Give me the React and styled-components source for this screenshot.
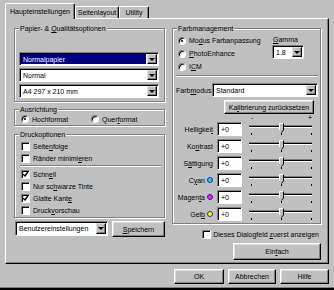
import React from "react"
import styled, { createGlobalStyle } from "styled-components"

const GlobalStyle = createGlobalStyle`
  html, body {
    margin: 0;
    padding: 0;
    background: #c0c0c0;
  }
  body {
    font-family: "Liberation Sans", Arial, sans-serif;
    font-size: 7px;
    color: #000;
  }
  * {
    box-sizing: border-box;
  }
  u {
    text-underline-offset: 1px;
  }
`

// window + tabs
const Window = styled.div`
  width: 334px;
  height: 290px;
  padding: 3px 0 0 5px;
  background: #c0c0c0;
  border-bottom: 2px solid #000;
  box-shadow: inset 0 -1px #808080;
  display: flex;
  flex-direction: column;
`
const TabStrip = styled.div`
  display: flex;
  align-items: flex-end;
  height: 15px;
  position: relative;
  z-index: 1;
`
const Tab = styled.div`
  width: ${p => p.$w}px;
  height: ${p => (p.$active ? 16 : 12)}px;
  margin-bottom: ${p => (p.$active ? -1 : 0)}px;
  display: flex;
  align-items: center;
  justify-content: center;
  background: #c0c0c0;
  border-top: 1px solid #fff;
  border-left: 1px solid #fff;
  border-right: 1px solid #000;
  box-shadow: inset -1px 0 #808080;
  border-radius: 2px 2px 0 0;
  white-space: nowrap;
`
const Panel = styled.div`
  width: 324px;
  height: 246px;
  border: 1px solid;
  border-color: #fff #000 #000 #fff;
  box-shadow: inset -1px -1px #808080;
  padding: 9px 0 0 8px;
  display: grid;
  grid-template-columns: 151px 149px;
  column-gap: 7px;
  align-items: start;
`
const Column = styled.div`
  display: flex;
  flex-direction: column;
`

// group boxes
const GroupBox = styled.div`
  position: relative;
  border: 1px solid #808080;
  box-shadow: inset 1px 1px #fff, 1px 1px #fff;
`
const GroupTitle = styled.span`
  position: absolute;
  top: -5px;
  left: 4px;
  padding: 0 1px;
  line-height: 9px;
  background: #c0c0c0;
  white-space: nowrap;
`
const PaperGroup = styled(GroupBox)`
  padding: 23px 5px 3px 4px;
  display: flex;
  flex-direction: column;
  gap: 2px;
`
const OrientGroup = styled(GroupBox)`
  margin-top: 7px;
  padding: 4px 3px 1px 6px;
  display: grid;
  grid-template-columns: 70px auto;
`
const PrintGroup = styled(GroupBox)`
  margin-top: 8px;
  padding: 5px 3px 1px 6px;
  display: flex;
  flex-direction: column;
`
const ColorGroup = styled(GroupBox)`
  padding: 5px 2px 2px 3px;
  display: flex;
  flex-direction: column;
`
const Separator = styled.div`
  height: 2px;
  border-top: 1px solid #808080;
  border-bottom: 1px solid #fff;
  margin: ${p => p.$m};
`

// combos, fields, buttons
const Combo = styled.div`
  display: flex;
  width: ${p => (p.$w ? `${p.$w}px` : "auto")};
  flex: ${p => (p.$grow ? 1 : "none")};
  height: ${p => p.$h || 14}px;
  padding: 1px;
  background: #fff;
  border: 1px solid;
  border-color: #808080 #fff #fff #808080;
  box-shadow: inset 1px 1px #000;
`
const ComboValue = styled.div`
  flex: 1;
  display: flex;
  align-items: center;
  margin-right: 1px;
  padding-left: 2px;
  background: ${p => (p.$selected ? "#000080" : "transparent")};
  color: ${p => (p.$selected ? "#fff" : "#000")};
  white-space: nowrap;
  overflow: hidden;
`
const DropButton = styled.div`
  width: 10px;
  flex: none;
  display: flex;
  align-items: center;
  justify-content: center;
  background: #c0c0c0;
  border: 1px solid;
  border-color: #dfdfdf #000 #000 #dfdfdf;
  box-shadow: inset -1px -1px #808080;
  &::after {
    content: "";
    width: 0;
    height: 0;
    border-left: 3px solid transparent;
    border-right: 3px solid transparent;
    border-top: 3px solid #000;
  }
`
const Button = styled.div`
  width: ${p => p.$w}px;
  height: ${p => p.$h || 15}px;
  flex: none;
  display: flex;
  align-items: center;
  justify-content: center;
  background: #c0c0c0;
  border: 1px solid;
  border-color: #fff #000 #000 #fff;
  box-shadow: inset -1px -1px #808080, inset 1px 1px #dfdfdf;
  white-space: nowrap;
`
const ValueField = styled.div`
  width: 25px;
  height: 14px;
  margin-left: 4px;
  padding-left: 3px;
  display: flex;
  align-items: center;
  background: #fff;
  border: 1px solid;
  border-color: #808080 #fff #fff #808080;
  box-shadow: inset 1px 1px #000;
`

// radios + checkboxes
const OptionRow = styled.div`
  display: flex;
  align-items: center;
  gap: 3px;
  height: ${p => p.$h || 12}px;
  white-space: nowrap;
`
const Radio = styled.span`
  position: relative;
  flex: none;
  width: 8px;
  height: 8px;
  border-radius: 50%;
  background: #fff;
  border: 1px solid;
  border-color: #808080 #fff #fff #808080;
  box-shadow: inset 1px 1px #000;
  &::after {
    content: "";
    display: ${p => (p.$checked ? "block" : "none")};
    position: absolute;
    left: 2px;
    top: 2px;
    width: 2px;
    height: 2px;
    border-radius: 50%;
    background: #000;
  }
`
const Box = styled.span`
  flex: none;
  width: 9px;
  height: 9px;
  display: flex;
  align-items: center;
  justify-content: center;
  background: #fff;
  border: 1px solid;
  border-color: #808080 #fff #fff #808080;
  box-shadow: inset 1px 1px #000;
`

function Check({ checked, children }) {
  return (
    <OptionRow>
      <Box>
        {checked && (
          <svg width="7" height="7" viewBox="0 0 7 7">
            <path d="M1 3 L3 5 L6 1" fill="none" stroke="#000" strokeWidth="1.4" />
          </svg>
        )}
      </Box>
      <span>{children}</span>
    </OptionRow>
  )
}

function Select({ value, selected, w, h, grow }) {
  return (
    <Combo $w={w} $h={h} $grow={grow}>
      <ComboValue $selected={selected}>{value}</ComboValue>
      <DropButton />
    </Combo>
  )
}

// right column parts
const TopSection = styled.div`
  display: flex;
`
const RadioList = styled.div`
  display: flex;
  flex-direction: column;
  margin-left: 2px;
`
const GammaBox = styled.div`
  margin-left: auto;
  margin-right: 14px;
  display: flex;
  flex-direction: column;
`
const GammaLabel = styled.div`
  height: 11px;
  line-height: 11px;
  padding-left: 1px;
`
const ModeRow = styled.div`
  display: flex;
  align-items: center;
  height: 14px;
`
const ModeLabel = styled.span`
  width: 36px;
  flex: none;
`
const CalibButton = styled(Button)`
  align-self: flex-end;
  margin: 3px 4px 0 0;
`
const ScaleRow = styled.div`
  height: 8px;
  margin-left: 73px;
  width: 63px;
  display: flex;
  justify-content: space-between;
  align-items: flex-end;
  line-height: 7px;
  padding: 0 0 1px 2px;
`
const SliderRows = styled.div`
  display: flex;
  flex-direction: column;
  gap: 3px;
`
const SliderRow = styled.div`
  display: flex;
  align-items: center;
  height: 14px;
`
const LabelCell = styled.div`
  width: 37px;
  display: flex;
  justify-content: flex-end;
  align-items: center;
  gap: 2px;
  white-space: nowrap;
`
const Dot = styled.span`
  width: 6px;
  height: 6px;
  border-radius: 50%;
  background: ${p => p.$color};
  border: 1px solid #2a2aa0;
`
const Slider = styled.div`
  position: relative;
  width: 63px;
  height: 14px;
  margin-left: 7px;
  padding-top: 3px;
`
const Track = styled.div`
  height: 3px;
  border-top: 1px solid #808080;
  border-bottom: 1px solid #fff;
  background: #000;
`
const Ticks = styled.div`
  display: flex;
  justify-content: space-between;
  margin-top: 5px;
  padding-left: 2px;
  &::before,
  &::after,
  span {
    content: "";
    width: 1px;
    height: 2px;
    background: #000;
  }
`
const Thumb = styled.svg`
  position: absolute;
  left: 30px;
  top: 1px;
`
const FirstRunRow = styled(OptionRow)`
  justify-content: flex-end;
  margin-top: 5px;
  height: 10px;
  padding-right: 2px;
  gap: 2px;
`
const SimpleButton = styled(Button)`
  align-self: flex-end;
  margin-top: 4px;
`

// bottom
const SaveRow = styled.div`
  display: flex;
  gap: 4px;
  margin: 3px 0 0 1px;
  align-items: flex-start;
`
const DialogButtons = styled.div`
  display: flex;
  justify-content: flex-end;
  gap: 4px;
  margin-top: 5px;
  padding-right: 5px;
`

const sliders = [
  { label: <>Helligkei<u>t</u></> },
  { label: <>Ko<u>n</u>trast</> },
  { label: <>S<u>ä</u>ttigung</> },
  { label: <>C<u>y</u>an</>, color: "#19c8ff" },
  { label: <>Magen<u>t</u>a</>, color: "#ff19ff" },
  { label: <>Gel<u>b</u></>, color: "#ffff00" },
]

export default function App() {
  return (
    <>
      <GlobalStyle />
      <Window>
        <TabStrip>
          <Tab $active $w={70}>Haupteinstellungen</Tab>
          <Tab $w={44}>Seitenlayout</Tab>
          <Tab $w={30}>Utility</Tab>
        </TabStrip>
        <Panel>
          <Column>
            <PaperGroup>
              <GroupTitle>
                Papier- &amp; <u>Q</u>ualitätsoptionen
              </GroupTitle>
              <Select value="Normalpapier" selected />
              <Select value="Normal" />
              <Select value="A4 297 x 210 mm" />
            </PaperGroup>
            <OrientGroup>
              <GroupTitle>Ausrichtung</GroupTitle>
              <OptionRow $h={10}>
                <Radio $checked />
                <span>Hochformat</span>
              </OptionRow>
              <OptionRow $h={10}>
                <Radio />
                <span>
                  Quer<u>f</u>ormat
                </span>
              </OptionRow>
            </OrientGroup>
            <PrintGroup>
              <GroupTitle>Druckoptionen</GroupTitle>
              <Check>
                Seite<u>n</u>folge
              </Check>
              <Check>
                Ränder minimi<u>e</u>ren
              </Check>
              <Separator $m="1px 0 1px -1px" />
              <Check checked>
                Schn<u>e</u>ll
              </Check>
              <Check>
                Nur sc<u>h</u>warze Tinte
              </Check>
              <Check checked>
                Glatte Kant<u>e</u>
              </Check>
              <Check>
                Druck<u>v</u>orschau
              </Check>
            </PrintGroup>
            <SaveRow>
              <Select value="Benutzereinstellungen" w={93} h={15} />
              <Button $w={53} $h={16}>
                <span>
                  <u>S</u>peichern
                </span>
              </Button>
            </SaveRow>
          </Column>

          <Column>
            <ColorGroup>
              <GroupTitle>Farbmanagement</GroupTitle>
              <TopSection>
                <RadioList>
                  <OptionRow $h={13}>
                    <Radio $checked />
                    <span>
                      Mo<u>d</u>us Farbanpassung
                    </span>
                  </OptionRow>
                  <OptionRow $h={13}>
                    <Radio />
                    <span>
                      <u>P</u>hotoEnhance
                    </span>
                  </OptionRow>
                  <OptionRow $h={13}>
                    <Radio />
                    <span>
                      I<u>C</u>M
                    </span>
                  </OptionRow>
                </RadioList>
                <GammaBox>
                  <GammaLabel>
                    <u>G</u>amma
                  </GammaLabel>
                  <Select value="1.8" w={32} />
                </GammaBox>
              </TopSection>
              <Separator $m="2px 0 6px" />
              <ModeRow>
                <ModeLabel>
                  Farb<u>m</u>odus
                </ModeLabel>
                <Select value="Standard" grow />
              </ModeRow>
              <CalibButton $w={90} $h={14}>
                <span>
                  Ka<u>l</u>ibrierung zurücksetzen
                </span>
              </CalibButton>
              <ScaleRow>
                <span>-</span>
                <span>+</span>
              </ScaleRow>
              <SliderRows>
                {sliders.map((s, i) => (
                  <SliderRow key={i}>
                    <LabelCell>
                      <span>{s.label}</span>
                      {s.color && <Dot $color={s.color} />}
                    </LabelCell>
                    <ValueField>+0</ValueField>
                    <Slider>
                      <Track />
                      <Ticks>
                        <span />
                      </Ticks>
                      <Thumb width="5" height="10" viewBox="0 0 5 10">
                        <path d="M0 0 H5 V7 L2.5 9.5 L0 7 Z" fill="#c0c0c0" />
                        <path d="M0.5 7 V0.5 H4.5" fill="none" stroke="#fff" strokeWidth="1" />
                        <path d="M4.5 0.5 V7 L2.5 9.5" fill="none" stroke="#000" strokeWidth="1" />
                      </Thumb>
                    </Slider>
                  </SliderRow>
                ))}
              </SliderRows>
            </ColorGroup>
            <FirstRunRow>
              <Box />
              <span>
                Dieses Dialogfeld <u>z</u>uerst anzeigen
              </span>
            </FirstRunRow>
            <SimpleButton $w={88} $h={17}>
              <span>
                Ein<u>f</u>ach
              </span>
            </SimpleButton>
          </Column>
        </Panel>
        <DialogButtons>
          <Button $w={50}>OK</Button>
          <Button $w={48}>Abbrechen</Button>
          <Button $w={49}>Hilfe</Button>
        </DialogButtons>
      </Window>
    </>
  )
}
